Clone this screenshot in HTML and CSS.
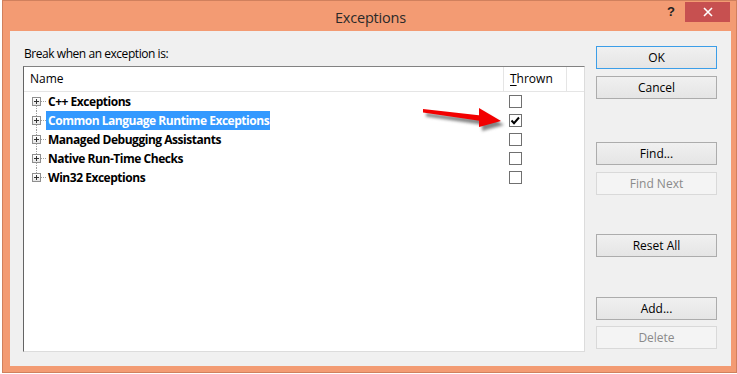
FILE: index.html
```html
<!DOCTYPE html>
<html>
<head>
<meta charset="utf-8">
<link rel="stylesheet" href="styles.css">
</head>
<body>
<div class="window">
  <div class="titlebar">
    <div class="tb-side"></div>
    <div class="title">Exceptions</div>
    <div class="tb-side controls">
      <span class="help">?</span>
      <span class="close"><svg width="10" height="10" viewBox="0 0 10 10"><path d="M1 1 L9 9 M9 1 L1 9" stroke="#fff" stroke-width="1.6"/></svg></span>
    </div>
  </div>
  <div class="client">
    <div class="left">
      <div class="label">Break when an exception is:</div>
      <div class="list">
        <div class="header">
          <div class="col-name">Name</div>
          <div class="col-thrown"><u>T</u>hrown</div>
          <div class="col-rest"></div>
        </div>
        <div class="rows">
          <div class="row first">
            <div class="tree"><span class="twisty"></span><span class="conn"></span><span class="text">C++ Exceptions</span></div>
            <div class="thrown"><span class="cb"></span></div>
          </div>
          <div class="row">
            <div class="tree"><span class="twisty"></span><span class="conn"></span><span class="text selected">Common Language Runtime Exceptions</span></div>
            <div class="thrown"><span class="cb"><svg width="11" height="11" viewBox="0 0 11 11"><path d="M1.5 5.5 L4 8.2 L9 2.5" fill="none" stroke="#000" stroke-width="2"/></svg></span></div>
          </div>
          <div class="row">
            <div class="tree"><span class="twisty"></span><span class="conn"></span><span class="text">Managed Debugging Assistants</span></div>
            <div class="thrown"><span class="cb"></span></div>
          </div>
          <div class="row">
            <div class="tree"><span class="twisty"></span><span class="conn"></span><span class="text">Native Run-Time Checks</span></div>
            <div class="thrown"><span class="cb"></span></div>
          </div>
          <div class="row last">
            <div class="tree"><span class="twisty"></span><span class="conn"></span><span class="text">Win32 Exceptions</span></div>
            <div class="thrown"><span class="cb"></span></div>
          </div>
        </div>
        <svg class="arrow" width="90" height="30" viewBox="0 0 90 30">
          <defs>
            <filter id="blur" x="-20%" y="-50%" width="140%" height="200%"><feGaussianBlur stdDeviation="1.6"/></filter>
          </defs>
          <g transform="translate(3,4)" fill="#5a5a5a" opacity="0.75" filter="url(#blur)">
            <polygon points="5,5 63,11.5 63,17 5,8.5"/>
            <polygon points="61,4 83,17 61,23"/>
          </g>
          <g fill="#f20000">
            <polygon points="5,5 63,11.5 63,17 5,8.5"/>
            <polygon points="61,4 83,17 61,23"/>
          </g>
        </svg>
      </div>
    </div>
    <div class="buttons">
      <button class="btn default">OK</button>
      <button class="btn gap-s">Cancel</button>
      <button class="btn gap-find">Find...</button>
      <button class="btn gap-s disabled">Find Next</button>
      <button class="btn gap-reset">Reset All</button>
      <button class="btn gap-add">Add...</button>
      <button class="btn gap-del disabled">Delete</button>
    </div>
  </div>
</div>
</body>
</html>
```
FILE: styles.css
```css
html, body {
  margin: 0;
  padding: 0;
  background: #ffffff;
}
body {
  font-family: "Open Sans", "Noto Sans", "Liberation Sans", sans-serif;
  font-size: 12px;
  color: #000;
}
.window {
  margin-left: 2px;
  width: 735px;
  height: 373px;
  box-sizing: border-box;
  border: 1px solid #d0805d;
  background: #f39b73;
  padding: 0 5px 6px 7px;
  display: flex;
  flex-direction: column;
}
.titlebar {
  height: 30px;
  display: grid;
  grid-template-columns: 1fr auto 1fr;
  align-items: start;
}
.title {
  font-size: 14.5px;
  color: #2a2a2a;
  line-height: 30px;
  letter-spacing: -0.2px;
  padding-top: 2px;
}
.controls {
  display: flex;
  justify-content: flex-end;
  align-items: flex-start;
}
.help {
  font-family: "Liberation Sans", sans-serif;
  font-weight: bold;
  font-size: 13px;
  color: #222;
  line-height: 20px;
  margin-top: 1px;
  margin-right: 10px;
}
.close {
  width: 45px;
  height: 20px;
  margin-top: 1px;
  margin-right: 1px;
  background: #c75050;
  display: flex;
  align-items: center;
  justify-content: center;
}
.client {
  flex: 1;
  background: #f0f0f0;
  display: flex;
  padding: 15px 14px 14px 13px;
  gap: 11px;
}
.left {
  flex: 1;
  display: flex;
  flex-direction: column;
}
.label {
  line-height: 15px;
  margin-left: 1px;
  margin-bottom: 5px;
  letter-spacing: -0.45px;
}
.list {
  flex: 1;
  position: relative;
  background: #fff;
  border-top: 1px solid #828282;
  border-left: 1px solid #646464;
  border-right: 1px solid #dcdcdc;
  border-bottom: 1px solid #dcdcdc;
}
.header {
  display: flex;
  height: 24px;
  border-bottom: 1px solid #e5e5e5;
}
.header > div {
  line-height: 24px;
  box-sizing: border-box;
}
.col-name {
  width: 480px;
  padding-left: 6px;
  border-right: 1px solid #e5e5e5;
}
.col-thrown {
  width: 63px;
  padding-left: 6px;
  border-right: 1px solid #e5e5e5;
}
.col-thrown u {
  text-decoration-thickness: 1px;
  text-underline-offset: 2px;
}
.col-rest {
  flex: 1;
}
.row {
  display: flex;
  height: 19px;
  position: relative;
}
.row::before {
  content: "";
  position: absolute;
  left: 12px;
  top: 0;
  bottom: 0;
  border-left: 1px dotted #a0a0a0;
}
.row.first::before {
  top: 9px;
}
.row.last::before {
  bottom: 10px;
}
.tree {
  width: 480px;
  display: flex;
  align-items: center;
  padding-left: 8px;
  box-sizing: border-box;
}
.twisty {
  width: 9px;
  height: 9px;
  box-sizing: border-box;
  border: 1px solid #8f8f8f;
  background: linear-gradient(#ffffff, #e6e6e6);
  position: relative;
  z-index: 1;
}
.twisty::before {
  content: "";
  position: absolute;
  left: 1px;
  top: 3px;
  width: 5px;
  height: 1px;
  background: #333;
}
.twisty::after {
  content: "";
  position: absolute;
  left: 3px;
  top: 1px;
  width: 1px;
  height: 5px;
  background: #333;
}
.conn {
  width: 5px;
  height: 0;
  border-top: 1px dotted #a0a0a0;
}
.text {
  font-weight: bold;
  line-height: 19px;
  height: 19px;
  padding: 0 1px 0 2px;
  letter-spacing: -0.47px;
  white-space: nowrap;
}
.text.selected {
  background: #3399ff;
  color: #fff;
}
.thrown {
  display: flex;
  align-items: center;
  padding-left: 5px;
}
.cb {
  width: 13px;
  height: 13px;
  box-sizing: border-box;
  border: 1px solid #707070;
  background: #fff;
  display: flex;
  align-items: center;
  justify-content: center;
}
.arrow {
  position: absolute;
  left: 394px;
  top: 37px;
}
.buttons {
  width: 121px;
  display: flex;
  flex-direction: column;
}
.btn {
  height: 23px;
  box-sizing: border-box;
  border: 1px solid #acacac;
  background: linear-gradient(#f0f0f0, #e5e5e5);
  font-family: inherit;
  font-size: 12px;
  color: #000;
  padding: 0;
  margin: 0;
}
.btn.default {
  border-color: #3c9ee8;
}
.btn.disabled {
  border-color: #d9d9d9;
  background: #f4f4f4;
  color: #8a8a8a;
}
.gap-s { margin-top: 7px; }
.gap-find { margin-top: 43px; }
.gap-reset { margin-top: 39px; }
.gap-add { margin-top: 40px; }
.gap-del { margin-top: 6px; }
```
